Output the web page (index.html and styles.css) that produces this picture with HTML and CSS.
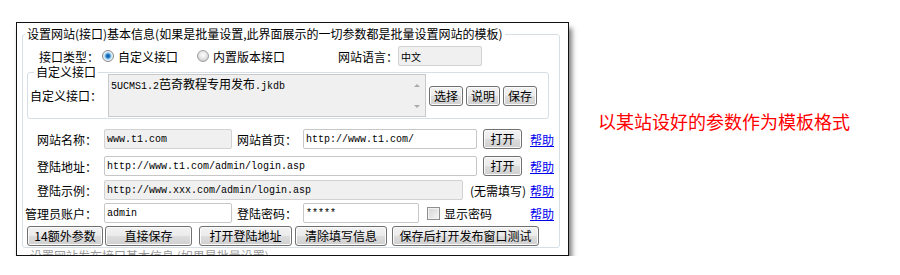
FILE: index.html
```html
<!DOCTYPE html>
<html lang="zh-CN">
<head>
    <meta charset="UTF-8">
    <title>设置网站接口</title>
    <link rel="stylesheet" href="styles.css">
</head>
<body>
    <div class="page">
        <div class="window">
            <fieldset class="group">
                <legend>设置网站(接口)基本信息(如果是批量设置,此界面展示的一切参数都是批量设置网站的模板)</legend>

                <div class="row type-row">
                    <span class="type-label">接口类型：</span>
                    <label class="opt"><input type="radio" name="jk" checked>自定义接口</label>
                    <label class="opt opt2"><input type="radio" name="jk">内置版本接口</label>
                    <span class="lang-label">网站语言：</span>
                    <input class="field gray lang" type="text" value="中文" readonly>
                </div>

                <fieldset class="sub">
                    <legend>自定义接口</legend>
                    <div class="sub-row">
                        <span class="sub-label">自定义接口：</span>
                        <div class="memo">
                            <div class="memo-text"><span class="asc">5UCMS1.2</span>芭奇教程专用发布<span class="asc">.jkdb</span></div>
                            <div class="scroll">
                                <span class="arrow up"></span>
                                <span class="arrow down"></span>
                            </div>
                        </div>
                        <button class="btn small-btn">选择</button>
                        <button class="btn small-btn">说明</button>
                        <button class="btn small-btn">保存</button>
                    </div>
                </fieldset>

                <div class="row first-row">
                    <span class="lbl">网站名称：</span>
                    <input class="field gray f-short" type="text" value="www.t1.com" readonly>
                    <span class="mid-lbl">网站首页：</span>
                    <input class="field f-home" type="text" value="http://www.t1.com/">
                    <button class="btn open-btn">打开</button>
                    <a class="help" href="#">帮助</a>
                </div>

                <div class="row login-row">
                    <span class="lbl">登陆地址：</span>
                    <input class="field f-login" type="text" value="http://www.t1.com/admin/login.asp">
                    <button class="btn open-btn">打开</button>
                    <a class="help" href="#">帮助</a>
                </div>

                <div class="row sample-row">
                    <span class="lbl">登陆示例：</span>
                    <input class="field gray f-sample" type="text" value="http://www.xxx.com/admin/login.asp" readonly>
                    <span class="hint">(无需填写)</span>
                    <a class="help" href="#">帮助</a>
                </div>

                <div class="row user-row">
                    <span class="lbl">管理员账户：</span>
                    <input class="field f-short" type="text" value="admin">
                    <span class="mid-lbl">登陆密码：</span>
                    <input class="field f-pass" type="text" value="*****">
                    <label class="show-pass"><input type="checkbox">显示密码</label>
                    <a class="help" href="#">帮助</a>
                </div>

                <div class="btn-row">
                    <button class="btn b-extra">14额外参数</button>
                    <button class="btn b-save">直接保存</button>
                    <button class="btn b-open">打开登陆地址</button>
                    <button class="btn b-clear">清除填写信息</button>
                    <button class="btn b-test">保存后打开发布窗口测试</button>
                </div>
            </fieldset>
            <div class="next">设置网站发布接口基本信息 (如果是批量设置)</div>
        </div>

        <div class="note">以某站设好的参数作为模板格式</div>
    </div>
</body>
</html>
```

FILE: styles.css
```css
body {
    margin: 0;
    font-family: "Noto Sans CJK SC", sans-serif;
    font-size: 12px;
    color: #000;
    background-color: #fff;
}

.page {
    display: flex;
    align-items: flex-start;
    padding: 22px 0 0 16px;
}

.window {
    width: 553px;
    height: 234px;
    box-sizing: border-box;
    padding: 4px 8px 0 5px;
    border: 1px solid #111;
    background-color: #fff;
    box-shadow: 3px 6px 5px rgba(0, 0, 0, 0.5);
    overflow: hidden;
}

.group {
    margin: 0;
    padding: 0 0 1px 0;
    border: 1px solid #d5dfe5;
    border-radius: 3px;
    min-width: 0;
}

.group > legend {
    margin-left: 2px;
    padding: 0 2px;
    line-height: 14px;
}

.row {
    display: flex;
    align-items: center;
    height: 20px;
    padding-right: 5px;
    white-space: nowrap;
}

/* radio / checkbox */
input[type="radio"] {
    appearance: none;
    width: 12px;
    height: 12px;
    margin: 0;
    box-sizing: border-box;
    border: 1px solid #a0a0a0;
    border-radius: 50%;
    background: radial-gradient(circle at 50% 40%, #fdfdfd 0, #e4e4e4 4px, #c9c9c9 6px);
}

input[type="radio"]:checked {
    border-color: #8a8a8a;
    background: radial-gradient(circle, #0d4d8c 0, #2f86cf 2px, #8cc7ef 3px, #dff0fb 4px, #efefef 5px);
}

input[type="checkbox"] {
    appearance: none;
    width: 13px;
    height: 13px;
    margin: 0;
    box-sizing: border-box;
    border: 1px solid #8f8f8f;
    background: linear-gradient(135deg, #d4d4d4, #f7f7f7);
    box-shadow: inset 0 0 0 1px #f2f2f2;
}

/* row 1 */
.type-row {
    margin-top: 5px;
}

.type-label {
    width: 60px;
    flex: none;
    margin-left: 16px;
}

.opt {
    display: flex;
    align-items: center;
    margin-left: 3px;
}

.opt2 {
    margin-left: 19px;
}

.opt input[type="radio"] {
    margin-right: 4px;
}

.lang-label {
    width: 60px;
    flex: none;
    margin-left: 53px;
}

.lang {
    margin-left: 7px;
    width: 84px;
    font-family: "Noto Sans CJK SC", sans-serif;
    font-size: 12px;
}

/* custom interface box */
.sub {
    margin: 0 10px 0 4px;
    padding: 0 0 1px 1px;
    border: 1px solid #d5dfe5;
    border-radius: 3px;
    min-width: 0;
}

.sub legend {
    margin-left: 5px;
    padding: 0 2px;
    line-height: 12px;
}

.sub-row {
    display: flex;
    align-items: center;
    margin-top: -4px;
}

.sub-label {
    width: 72px;
    flex: none;
    margin-left: 1px;
}

.memo {
    display: flex;
    width: 318px;
    height: 43px;
    margin-left: 6px;
    box-sizing: border-box;
    border: 1px solid #c9c9c9;
    background-color: #f0f0f0;
}

.memo-text {
    flex: 1;
    padding: 2px 0 0 2px;
    line-height: 14px;
}

.asc {
    font-family: "Liberation Mono", monospace;
    font-size: 10px;
}

.scroll {
    width: 16px;
    display: flex;
    flex-direction: column;
    justify-content: space-between;
    align-items: center;
    padding: 9px 0 8px;
}

.arrow {
    width: 0;
    height: 0;
    border-left: 3px solid transparent;
    border-right: 3px solid transparent;
}

.arrow.up {
    border-bottom: 3px solid #aaa;
}

.arrow.down {
    border-top: 3px solid #aaa;
}

.small-btn {
    width: 34px;
    margin-left: 3px;
}

/* inputs */
.field {
    height: 20px;
    box-sizing: border-box;
    margin: 0;
    padding: 0 0 0 2px;
    border: 1px solid #c7c7c7;
    border-radius: 2px;
    background-color: #fff;
    font-family: "Liberation Mono", monospace;
    font-size: 10px;
    color: #000;
    outline: none;
}

.field.gray {
    background-color: #f0f0f0;
    border-color: #d2d2d2;
}

.lbl {
    width: 74px;
    text-align: right;
    flex: none;
}

.lbl + .field {
    margin-left: 7px;
}

.mid-lbl {
    width: 60px;
    flex: none;
    margin-left: 5px;
}

.mid-lbl + .field {
    margin-left: 6px;
}

.f-short {
    width: 128px;
}

.f-home {
    width: 174px;
}

.f-login {
    width: 373px;
}

.f-sample {
    width: 359px;
}

.f-pass {
    width: 116px;
}

.first-row {
    margin-top: 10px;
}

.login-row {
    margin-top: 7px;
}

.sample-row {
    margin-top: 4px;
}

.user-row {
    margin-top: 3px;
}

.open-btn {
    width: 39px;
    margin-left: 6px;
}

.hint {
    margin-left: 7px;
}

.help {
    margin-left: auto;
    color: #0000ee;
    text-decoration: underline;
}

.show-pass {
    display: flex;
    align-items: center;
    margin-left: 8px;
}

.show-pass input[type="checkbox"] {
    margin-right: 4px;
}

/* buttons */
.btn {
    height: 20px;
    box-sizing: border-box;
    padding: 0;
    border: 1px solid #707070;
    border-radius: 3px;
    background: linear-gradient(#f2f2f2 0%, #ebebeb 48%, #dddddd 52%, #cfcfcf 100%);
    box-shadow: inset 0 0 0 1px #fbfbfb;
    font-family: "Noto Sans CJK SC", sans-serif;
    font-size: 12px;
    line-height: 16px;
    color: #000;
    cursor: pointer;
}

.btn-row {
    display: flex;
    height: 20px;
    margin-top: 3px;
}

.b-extra {
    width: 76px;
    margin-left: 4px;
}

.b-save {
    width: 87px;
    margin-left: 2px;
}

.b-open {
    width: 93px;
    margin-left: 7px;
}

.b-clear {
    width: 92px;
    margin-left: 3px;
}

.b-test {
    width: 147px;
    margin-left: 5px;
}

.next {
    margin: 1px 0 0 8px;
    line-height: 14px;
    color: #9a9a9a;
    white-space: nowrap;
}

.note {
    margin: 90px 0 0 29px;
    font-size: 18px;
    line-height: 18px;
    color: #ff0000;
    white-space: nowrap;
}
```
